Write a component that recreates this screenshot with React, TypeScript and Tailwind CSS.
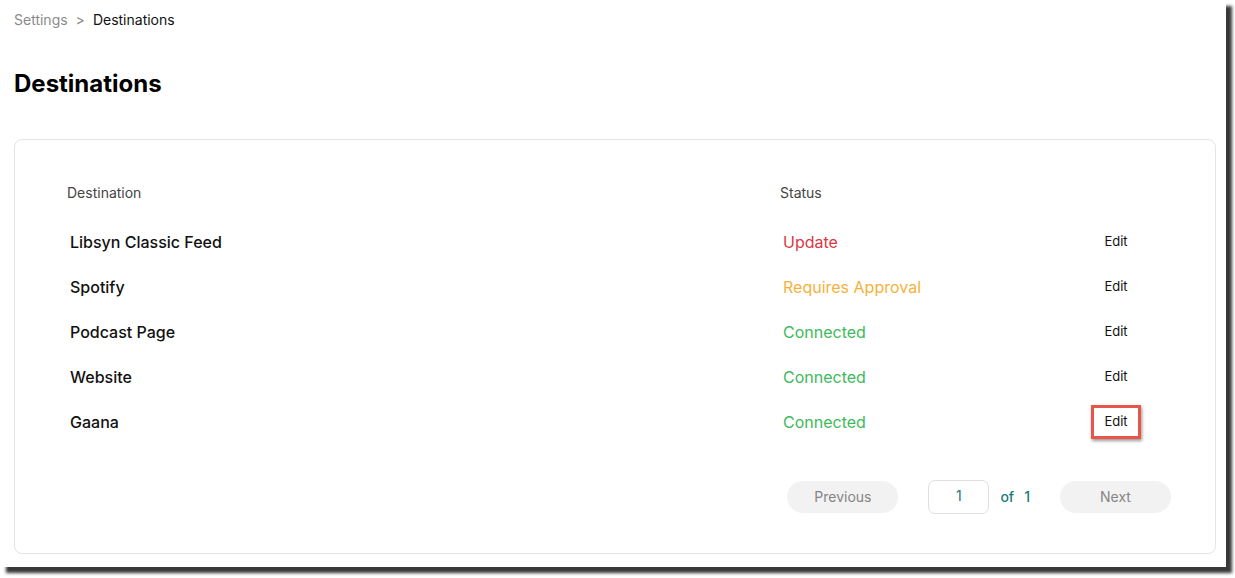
import React from 'react';

type Row = {
  name: string;
  status: string;
  tone: 'red' | 'amber' | 'green';
  highlight?: boolean;
};

const rows: Row[] = [
  { name: 'Libsyn Classic Feed', status: 'Update', tone: 'red' },
  { name: 'Spotify', status: 'Requires Approval', tone: 'amber' },
  { name: 'Podcast Page', status: 'Connected', tone: 'green' },
  { name: 'Website', status: 'Connected', tone: 'green' },
  { name: 'Gaana', status: 'Connected', tone: 'green', highlight: true },
];

const toneClass = {
  red: 'text-[#d93a3f]',
  amber: 'text-[#f4b23c]',
  green: 'text-[#3dba5b]',
};

export default function App() {
  return (
    <div className="min-h-screen bg-white font-['Inter','Liberation_Sans',sans-serif]">
      <div className="w-[1226px] h-[567px] bg-white shadow-[6px_6px_3px_rgba(0,0,0,0.78)] pl-[14px] pr-[10px] pt-[10px]">
        {/* Breadcrumb */}
        <div className="flex items-center h-5 text-sm text-[#111]">
          <span className="text-[#8a8a8a]">Settings</span>
          <span className="text-[#8a8a8a] mx-[8px]">&gt;</span>
          <span>Destinations</span>
        </div>

        <h1 className="mt-[38px] h-8 leading-8 text-[24px] font-bold text-black">Destinations</h1>

        {/* Card */}
        <div className="mt-[39px] w-[1202px] h-[415px] border border-[#e4e4e4] rounded-[8px] pt-[43px] pl-[52px] pr-[74px]">
          <div className="grid grid-cols-[713px_311px_50px] h-5 items-center text-sm text-[#444]">
            <div>Destination</div>
            <div>Status</div>
            <div />
          </div>

          <div className="mt-[16px]">
            {rows.map((r) => (
              <div key={r.name} className="grid grid-cols-[713px_311px_50px] h-[45px] items-center">
                <div className="pl-[3px] text-base font-medium text-[#111]">{r.name}</div>
                <div className={`pl-[3px] text-base ${toneClass[r.tone]}`}>{r.status}</div>
                <div className="flex justify-center">
                  {r.highlight ? (
                    <span className="w-[50px] h-[34px] flex items-center justify-center border-[3px] border-[#e8564a] bg-white text-[13px] text-[#111] shadow-[1px_2px_3px_rgba(0,0,0,0.4)]">
                      Edit
                    </span>
                  ) : (
                    <span className="text-[13px] text-[#111]">Edit</span>
                  )}
                </div>
              </div>
            ))}
          </div>

          {/* Pagination */}
          <div className="mt-[36px] flex items-center justify-end -mr-[30px]">
            <button className="w-[111px] h-[32px] rounded-full bg-[#f2f2f2] text-sm text-[#858585]">
              Previous
            </button>
            <div className="ml-[30px] w-[61px] h-[34px] rounded-[7px] border border-[#e0e0e0] flex items-center justify-center text-sm text-[#1c7a7a] pb-[3px]">
              1
            </div>
            <span className="ml-[11px] text-sm font-medium text-[#1c7a7a]">of</span>
            <span className="ml-[10px] text-sm font-medium text-[#1c7a7a]">1</span>
            <button className="ml-[30px] w-[111px] h-[32px] rounded-full bg-[#f2f2f2] text-sm text-[#858585]">
              Next
            </button>
          </div>
        </div>
      </div>
    </div>
  );
}
